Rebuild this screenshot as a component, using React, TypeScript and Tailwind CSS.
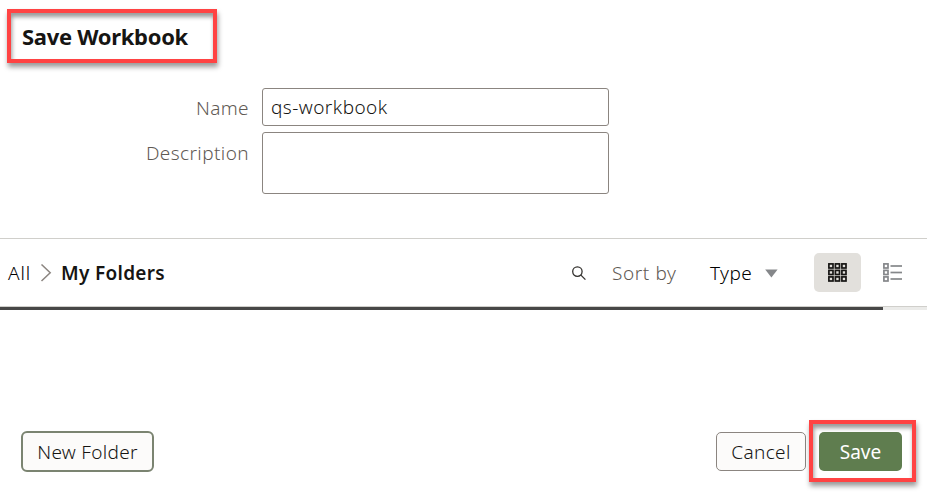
import React from "react";

function SearchIcon() {
  return (
    <svg width="16" height="16" viewBox="0 0 16 16" fill="none" stroke="#33312e" strokeWidth="1.3">
      <circle cx="6.4" cy="6.6" r="4.7" />
      <path d="M9.7 9.9 14.4 14.6" />
    </svg>
  );
}

function GridIcon() {
  const steps = [0, 6.5, 13];
  return (
    <svg width="19" height="19" viewBox="0 0 19 19" fill="none" stroke="#161513" strokeWidth="1.7">
      {steps.map((y) =>
        steps.map((x) => <rect key={`${x}-${y}`} x={x + 0.9} y={y + 0.9} width="4.1" height="4.1" />)
      )}
    </svg>
  );
}

function ListIcon() {
  const steps = [0, 6.5, 13];
  return (
    <svg width="20" height="19" viewBox="0 0 20 19" fill="none" stroke="#85878a" strokeWidth="1.7">
      {steps.map((y) => (
        <g key={y}>
          <rect x="0.9" y={y + 0.9} width="4.1" height="4.1" />
          <path d={`M7.5 ${y + 3}H19`} />
        </g>
      ))}
    </svg>
  );
}

export default function App() {
  return (
    <div className="relative flex h-[494px] w-[927px] flex-col overflow-hidden bg-white font-['Noto_Sans',sans-serif] text-[19px] font-light leading-6 text-[#161513]">
      <header className="h-[88px] pl-[22px] pt-6">
        <h1 className="text-[22px] font-bold leading-6 tracking-[-0.3px]">Save Workbook</h1>
      </header>

      <section className="flex h-[150px] flex-col gap-1.5 text-[#5f5a54]">
        <div className="flex h-[38px] items-start">
          <label className="w-[249px] pt-2 text-right tracking-[0.4px]">Name</label>
          <input
            className="ml-[13px] h-[38px] w-[347px] rounded-[3px] border border-[#8b8580] bg-white px-2 pb-px tracking-[0.45px] text-[#161513] outline-none"
            defaultValue="qs-workbook"
          />
        </div>
        <div className="flex h-[62px] items-start">
          <label className="w-[249px] pt-[9px] text-right tracking-[0.4px]">Description</label>
          <textarea className="ml-[13px] h-[62px] w-[347px] resize-none rounded-[3px] border border-[#8b8580] bg-white outline-none" />
        </div>
      </section>

      <nav className="flex h-[69px] items-center border-y border-[#d0cfcb]">
        <span className="w-[40px] pl-2 tracking-[0.9px] text-black">All</span>
        <svg width="12" height="18" viewBox="0 0 12 18" fill="none" stroke="#8b8580" strokeWidth="1.5">
          <path d="M1.5 0.5 10.2 8.7 1.5 17" />
        </svg>
        <span className="ml-[9px] w-[510px] font-semibold tracking-[0.3px]">My Folders</span>
        <SearchIcon />
        <span className="ml-[25px] w-[98px] tracking-[0.6px] text-[#5f5a54]">Sort by</span>
        <span className="w-[55px] tracking-[0.4px] text-black">Type</span>
        <svg className="mt-0.5" width="13" height="9" viewBox="0 0 13 9" fill="#85878a">
          <path d="M0.2 0.5h12.4L6.4 8.5z" />
        </svg>
        <button className="ml-[36px] flex h-[39px] w-[47px] items-center justify-center rounded-[5px] bg-[#e2e0dc]">
          <GridIcon />
        </button>
        <button className="ml-[22px]">
          <ListIcon />
        </button>
      </nav>
      <div className="h-[3px] bg-[#ebebe9]">
        <div className="h-[3px] w-[883px] bg-[#474747]" />
      </div>

      <footer className="mt-[121px] flex h-[41px] items-center pl-[21px]">
        <button className="h-[41px] w-[133px] rounded-md border-2 border-[#7b8471] bg-[#fcfbfa] tracking-[0.3px]">New Folder</button>
        <button className="ml-[562px] h-[39px] w-[90px] rounded-[5px] border border-[#8b8580] bg-[#fcfbfa] tracking-[0.35px]">Cancel</button>
        <button className="ml-[13px] h-[39px] w-[83px] rounded-[5px] bg-[#5f7d4f] font-normal text-white">Save</button>
      </footer>

      <div className="pointer-events-none absolute left-[7px] top-[9px] h-[54px] w-[210px] border-4 border-[#ff4343] shadow-[1px_4px_5px_rgba(0,0,0,0.4),inset_1px_4px_4px_rgba(0,0,0,0.4)]" />
      <div className="pointer-events-none absolute left-[809px] top-[420px] h-[62px] w-[107px] border-4 border-[#ff4343] shadow-[1px_4px_5px_rgba(0,0,0,0.4),inset_1px_4px_4px_rgba(0,0,0,0.4)]" />
    </div>
  );
}
